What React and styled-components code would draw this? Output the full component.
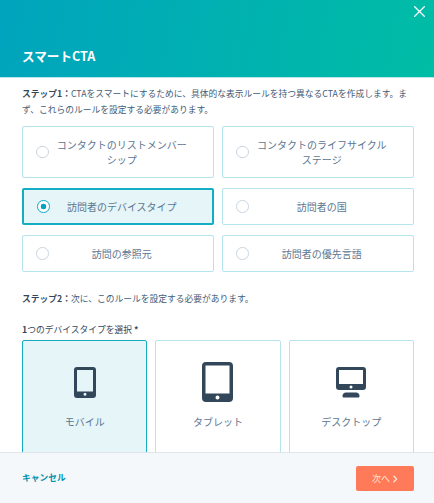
import React from "react";
import styled, { createGlobalStyle } from "styled-components";

const rules = [
  { label: "コンタクトのリストメンバーシップ" },
  { label: "コンタクトのライフサイクルステージ" },
  { label: "訪問者のデバイスタイプ", selected: true },
  { label: "訪問者の国" },
  { label: "訪問の参照元" },
  { label: "訪問者の優先言語" },
];

const PhoneIcon = () => (
  <svg width="22" height="31" viewBox="0 0 22 31">
    <path
      fillRule="evenodd"
      fill="#33475b"
      d="M3 0h16a3 3 0 0 1 3 3v25a3 3 0 0 1-3 3H3a3 3 0 0 1-3-3V3a3 3 0 0 1 3-3zM3 3v21.500h16V3zM11 25.800a1.500 1.500 0 1 0 0 3 1.500 1.500 0 0 0 0-3z"
    />
  </svg>
);

const TabletIcon = () => (
  <svg width="31" height="40" viewBox="0 0 31 40">
    <path
      fillRule="evenodd"
      fill="#33475b"
      d="M4 0h23a4 4 0 0 1 4 4v32a4 4 0 0 1-4 4H4a4 4 0 0 1-4-4V4a4 4 0 0 1 4-4zM3.500 3.500V31.500h24V3.500zM15.500 33.500a2 2 0 1 0 0 4 2 2 0 0 0 0-4z"
    />
  </svg>
);

const DesktopIcon = () => (
  <svg width="30" height="31" viewBox="0 0 30 31">
    <path
      fillRule="evenodd"
      fill="#33475b"
      d="M3 0h24a3 3 0 0 1 3 3v17a3 3 0 0 1-3 3H3a3 3 0 0 1-3-3V3a3 3 0 0 1 3-3zM3 3v14h24V3zM15 18.500a1.500 1.500 0 1 0 0 3 1.500 1.500 0 0 0 0-3zM10 25.500h10c2 0 3.500 1.500 3.500 3.500 0 1-.5 1.500-1.500 1.500H8c-1 0-1.500-.5-1.500-1.500 0-2 1.500-3.500 3.500-3.500z"
    />
  </svg>
);

const devices = [
  { label: "モバイル", icon: <PhoneIcon />, selected: true },
  { label: "タブレット", icon: <TabletIcon /> },
  { label: "デスクトップ", icon: <DesktopIcon /> },
];

const App = () => {
  return (
    <Modal>
      <GlobalStyle />
      <Header>
        <CloseButton aria-label="close">
          <svg width="11" height="11" viewBox="0 0 11 11">
            <path d="M.7.7l9.600 9.600M10.300.7L.7 10.300" stroke="#fff" strokeWidth="1.300" strokeLinecap="round" />
          </svg>
        </CloseButton>
        <Title>スマートCTA</Title>
      </Header>
      <Body>
        <Intro>
          <b>ステップ1：</b>CTAをスマートにするために、具体的な表示ルールを持つ異なるCTAを作成します。まず、これらのルールを設定する必要があります。
        </Intro>
        <RuleGrid>
          {rules.map((rule) => (
            <RuleCard key={rule.label} $selected={rule.selected}>
              <Radio $selected={rule.selected} />
              <RuleLabel>{rule.label}</RuleLabel>
            </RuleCard>
          ))}
        </RuleGrid>
        <StepTwo>
          <b>ステップ2：</b>次に、このルールを設定する必要があります。
        </StepTwo>
        <FieldLabel>
          <b>1</b>つのデバイスタイプを選択 <b>*</b>
        </FieldLabel>
        <DeviceGrid>
          {devices.map((device) => (
            <DeviceCard key={device.label} $selected={device.selected}>
              <IconSlot>{device.icon}</IconSlot>
              <DeviceLabel>{device.label}</DeviceLabel>
            </DeviceCard>
          ))}
        </DeviceGrid>
      </Body>
      <Footer>
        <CancelLink>キャンセル</CancelLink>
        <NextButton>
          次へ
          <svg width="6" height="8" viewBox="0 0 6 8">
            <path d="M1.500.8L4.600 4 1.500 7.200" fill="none" stroke="#ffe3db" strokeWidth="1.300" />
          </svg>
        </NextButton>
      </Footer>
    </Modal>
  );
};

const GlobalStyle = createGlobalStyle`
  html, body {
    margin: 0;
    padding: 0;
    background: #fff;
  }
  * {
    box-sizing: border-box;
  }
`;

const Modal = styled.div`
  width: 434px;
  height: 503px;
  display: flex;
  flex-direction: column;
  overflow: hidden;
  background: #fff;
  color: #33475b;
  font-family: "Noto Sans CJK JP", "Noto Sans", sans-serif;
`;

const Header = styled.header`
  position: relative;
  height: 78px;
  flex: none;
  display: flex;
  align-items: flex-end;
  padding: 0 22px 11px;
  background: linear-gradient(100deg, #00a4bd 0%, #00bda5 100%);
  border-bottom: 1px solid #b8e6ea;
`;

const CloseButton = styled.button`
  position: absolute;
  top: 6px;
  right: 9px;
  width: 11px;
  height: 11px;
  padding: 0;
  display: flex;
  border: 0;
  background: none;
`;

const Title = styled.h1`
  margin: 0;
  font-size: 12.600px;
  line-height: 20px;
  font-weight: 700;
  color: #fff;
`;

const Body = styled.main`
  flex: 1;
  min-height: 0;
  overflow: hidden;
  padding: 8px 20px 0 22px;
`;

const Intro = styled.p`
  margin: 0 0 9px;
  font-size: 8.750px;
  line-height: 15.500px;
  color: #425b76;
  b {
    color: #33475b;
  }
`;

const RuleGrid = styled.div`
  display: grid;
  grid-template-columns: 192px 192px;
  grid-template-rows: 52px 37px 37px;
  gap: 10px 8px;
`;

const RuleCard = styled.div`
  display: flex;
  align-items: center;
  padding: 0 26px 0 13px;
  border-radius: 2px;
  border: ${(p) => (p.$selected ? "2px solid #14adc4" : "1.500px solid #b5e4ec")};
  background: ${(p) => (p.$selected ? "#e5f5f8" : "#fff")};
`;

const Radio = styled.span`
  flex: none;
  width: 12.500px;
  height: 12.500px;
  border-radius: 50%;
  background: ${(p) => (p.$selected ? "radial-gradient(circle, #00a4bd 0 2.600px, #fff 3.100px)" : "#fff")};
  border: ${(p) => (p.$selected ? "1.500px solid #14adc4" : "1px solid #cbd6e2")};
`;

const RuleLabel = styled.span`
  flex: 1;
  margin-left: 8px;
  text-align: center;
  font-size: 10px;
  line-height: 15.500px;
  color: #5c7690;
`;

const StepTwo = styled.p`
  margin: 19px 0 0;
  font-size: 8.750px;
  line-height: 16px;
  color: #425b76;
  b {
    color: #33475b;
  }
`;

const FieldLabel = styled.p`
  margin: 15px 0 0;
  font-size: 8.750px;
  line-height: 16px;
  color: #33475b;
`;

const DeviceGrid = styled.div`
  margin-top: 2px;
  display: grid;
  grid-template-columns: repeat(3, 1fr);
  gap: 8px;
  width: 392px;
`;

const DeviceCard = styled.div`
  height: 130px;
  display: flex;
  flex-direction: column;
  align-items: center;
  padding-top: 21px;
  border-radius: 2px;
  border: ${(p) => (p.$selected ? "1.500px solid #14adc4" : "1.500px solid #b5e4ec")};
  background: ${(p) => (p.$selected ? "#e5f5f8" : "#fff")};
`;

const IconSlot = styled.div`
  height: 40px;
  display: flex;
  align-items: center;
  justify-content: center;
`;

const DeviceLabel = styled.div`
  margin-top: 12px;
  font-size: 10px;
  line-height: 16px;
  color: #5c7690;
`;

const Footer = styled.footer`
  height: 51px;
  flex: none;
  display: flex;
  align-items: flex-start;
  justify-content: space-between;
  padding: 13px 20px 0 22px;
  background: #f5f8fa;
  border-top: 1px solid #dfe3eb;
`;

const CancelLink = styled.a`
  font-size: 8.750px;
  line-height: 24px;
  font-weight: 700;
  color: #0091ae;
`;

const NextButton = styled.button`
  width: 58px;
  height: 25px;
  display: flex;
  align-items: center;
  justify-content: center;
  gap: 2px;
  padding: 0;
  border: 0;
  border-radius: 2px;
  background: #ff7a59;
  color: #ffe3db;
  font-family: inherit;
  font-size: 9px;
`;

export default App;
